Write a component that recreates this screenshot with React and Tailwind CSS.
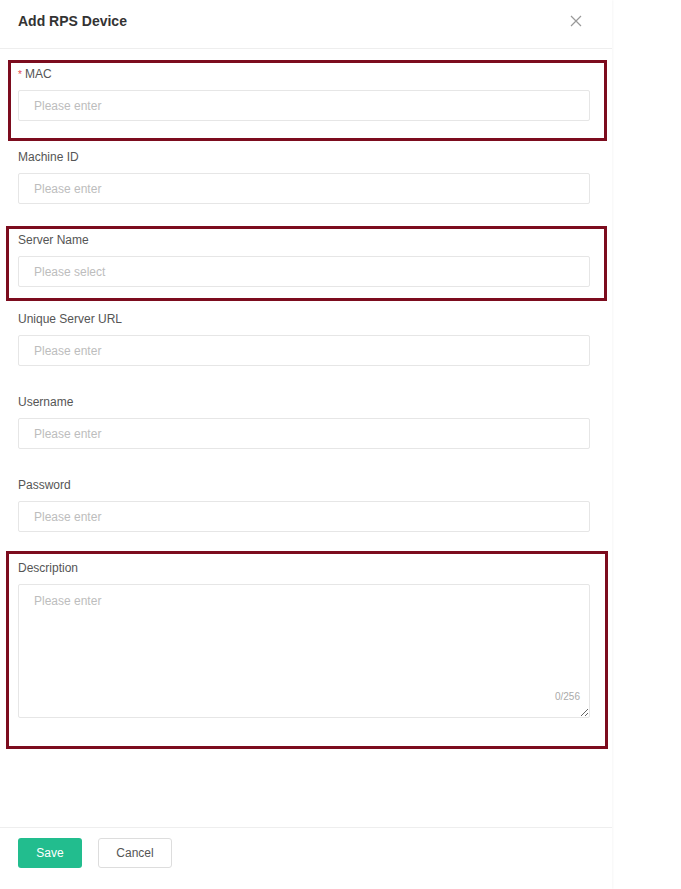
import { useState } from 'react';

const fields = [
  { key: 'mac', label: 'MAC', required: true, placeholder: 'Please enter', mark: 'top-[-6px] bottom-[-20px] left-[-10px] right-[-17px]' },
  { key: 'machineId', label: 'Machine ID', placeholder: 'Please enter' },
  { key: 'serverName', label: 'Server Name', placeholder: 'Please select', mark: 'top-[-6px] bottom-[-14px] left-[-12px] right-[-17px]', tight: true },
  { key: 'serverUrl', label: 'Unique Server URL', placeholder: 'Please enter' },
  { key: 'username', label: 'Username', placeholder: 'Please enter' },
  { key: 'password', label: 'Password', placeholder: 'Please enter', type: 'password' },
];

function Field({ field, value, onChange }) {
  return (
    <div className={field.tight ? 'relative mb-[24px]' : 'relative mb-[28px]'}>
      <label className="flex items-center h-[16px] mb-[8px] text-[12px] text-[#555]">
        {field.required && <span className="text-[#e5484d] mr-[3px] text-[10px]">*</span>}
        {field.label}
      </label>
      <input
        type={field.type || 'text'}
        value={value}
        onChange={(e) => onChange(e.target.value)}
        placeholder={field.placeholder}
        className="block w-full h-[31px] pl-[15px] text-[12px] text-[#333] border border-[#e6e6e6] rounded-[2px] outline-none placeholder:text-[#bdbdbd]"
      />
      {/* annotation box */}
      {field.mark && (
        <div className={`pointer-events-none absolute border-[3px] border-[#7c0c1e] ${field.mark}`} />
      )}
    </div>
  );
}

export default function App() {
  const [form, setForm] = useState({});
  const [desc, setDesc] = useState('');

  return (
    <div className="w-full h-[889px] bg-white" style={{ fontFamily: '"Liberation Sans", Arial, sans-serif' }}>
      <div className="w-[612px] h-full flex flex-col bg-white shadow-[1px_0_2px_rgba(0,0,0,0.04)]">
        {/* Header */}
        <div className="h-[49px] flex items-start justify-between pl-[18px] pr-[30px] pt-[12px] border-b border-[#eeeeee]">
          <h2 className="text-[14px] leading-[18px] font-bold text-[#333]">Add RPS Device</h2>
          <button className="mt-[3px] text-[#999]">
            <svg width="12" height="12" viewBox="0 0 12 12" fill="none" stroke="currentColor" strokeWidth="1.2">
              <path d="M1 1L11 11M11 1L1 11" />
            </svg>
          </button>
        </div>

        {/* Body */}
        <div className="pl-[18px] pr-[22px] pt-[17px]">
          {fields.map((f) => (
            <Field
              key={f.key}
              field={f}
              value={form[f.key] || ''}
              onChange={(v) => setForm({ ...form, [f.key]: v })}
            />
          ))}

          <div className="relative">
            <label className="flex items-center h-[16px] mb-[8px] text-[12px] text-[#555]">Description</label>
            <div className="relative">
              <textarea
                value={desc}
                maxLength={256}
                onChange={(e) => setDesc(e.target.value)}
                placeholder="Please enter"
                className="block w-full h-[134px] pl-[15px] pt-[8px] text-[12px] leading-[16px] text-[#333] border border-[#e6e6e6] rounded-[2px] outline-none resize-y placeholder:text-[#bdbdbd]"
              />
              <span className="absolute right-[10px] bottom-[14px] text-[10px] text-[#aaa]">{desc.length}/256</span>
            </div>
            <div className="pointer-events-none absolute top-[-9px] bottom-[-31px] left-[-12px] right-[-18px] border-[3px] border-[#7c0c1e]" />
          </div>
        </div>

        {/* Footer */}
        <div className="mt-auto border-t border-[#eeeeee] pt-[10px] pb-[21px] pl-[18px] flex gap-[16px]">
          <button className="w-[64px] h-[30px] rounded-[3px] bg-[#22bd8e] text-white text-[12px]">Save</button>
          <button className="w-[74px] h-[30px] rounded-[3px] border border-[#dddddd] bg-white text-[#555] text-[12px]">Cancel</button>
        </div>
      </div>
    </div>
  );
}
